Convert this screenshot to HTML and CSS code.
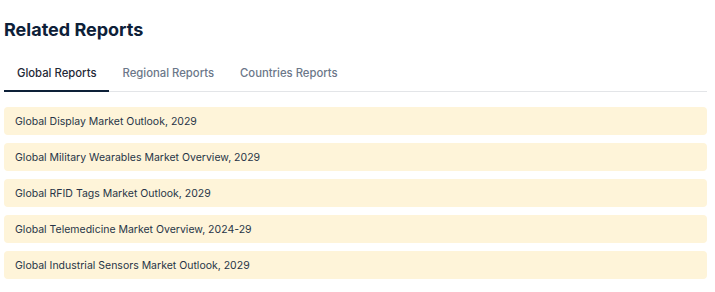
FILE: index.html
```html
<!DOCTYPE html>
<html lang="en">
<head>
  <meta charset="UTF-8">
  <title>Related Reports</title>
  <link rel="stylesheet" href="styles.css">
</head>
<body>
  <section class="related">
    <h2>Related Reports</h2>

    <div class="tabs">
      <a class="tab active" href="#">Global Reports</a>
      <a class="tab" href="#">Regional Reports</a>
      <a class="tab" href="#">Countries Reports</a>
    </div>

    <ul class="reports">
      <li><a href="#">Global Display Market Outlook, 2029</a></li>
      <li><a href="#">Global Military Wearables Market Overview, 2029</a></li>
      <li><a href="#">Global RFID Tags Market Outlook, 2029</a></li>
      <li><a href="#">Global Telemedicine Market Overview, 2024-29</a></li>
      <li><a href="#">Global Industrial Sensors Market Outlook, 2029</a></li>
    </ul>
  </section>
</body>
</html>
```

FILE: styles.css
```css
body {
  margin: 0;
  font-family: Inter, "Noto Sans", sans-serif;
  background: #fff;
  color: #1f2a3a;
}

.related {
  padding: 17px 8px 0 4px;
}

.related h2 {
  margin: 0;
  font-size: 18px;
  font-weight: 700;
  color: #0d2038;
  line-height: 26px;
}

.tabs {
  display: flex;
  margin-top: 22px;
  border-bottom: 1px solid #e3e5e8;
}

.tab {
  padding: 1px 13px 9px;
  font-size: 11.3px;
  font-weight: 500;
  line-height: 15px;
  color: #6b7789;
  text-decoration: none;
  margin-bottom: -1px;
  border-bottom: 2px solid transparent;
}

.tab.active {
  color: #1f2937;
  border-bottom-color: #0d2038;
}

.reports {
  list-style: none;
  margin: 15px 0 0;
  padding: 0;
  display: flex;
  flex-direction: column;
  gap: 8px;
}

.reports li a {
  display: block;
  background: #fef4d9;
  border-radius: 4px;
  padding: 1px 11px 0;
  height: 27px;
  line-height: 28px;
  font-size: 10.5px;
  color: #273447;
  text-decoration: none;
}
```
